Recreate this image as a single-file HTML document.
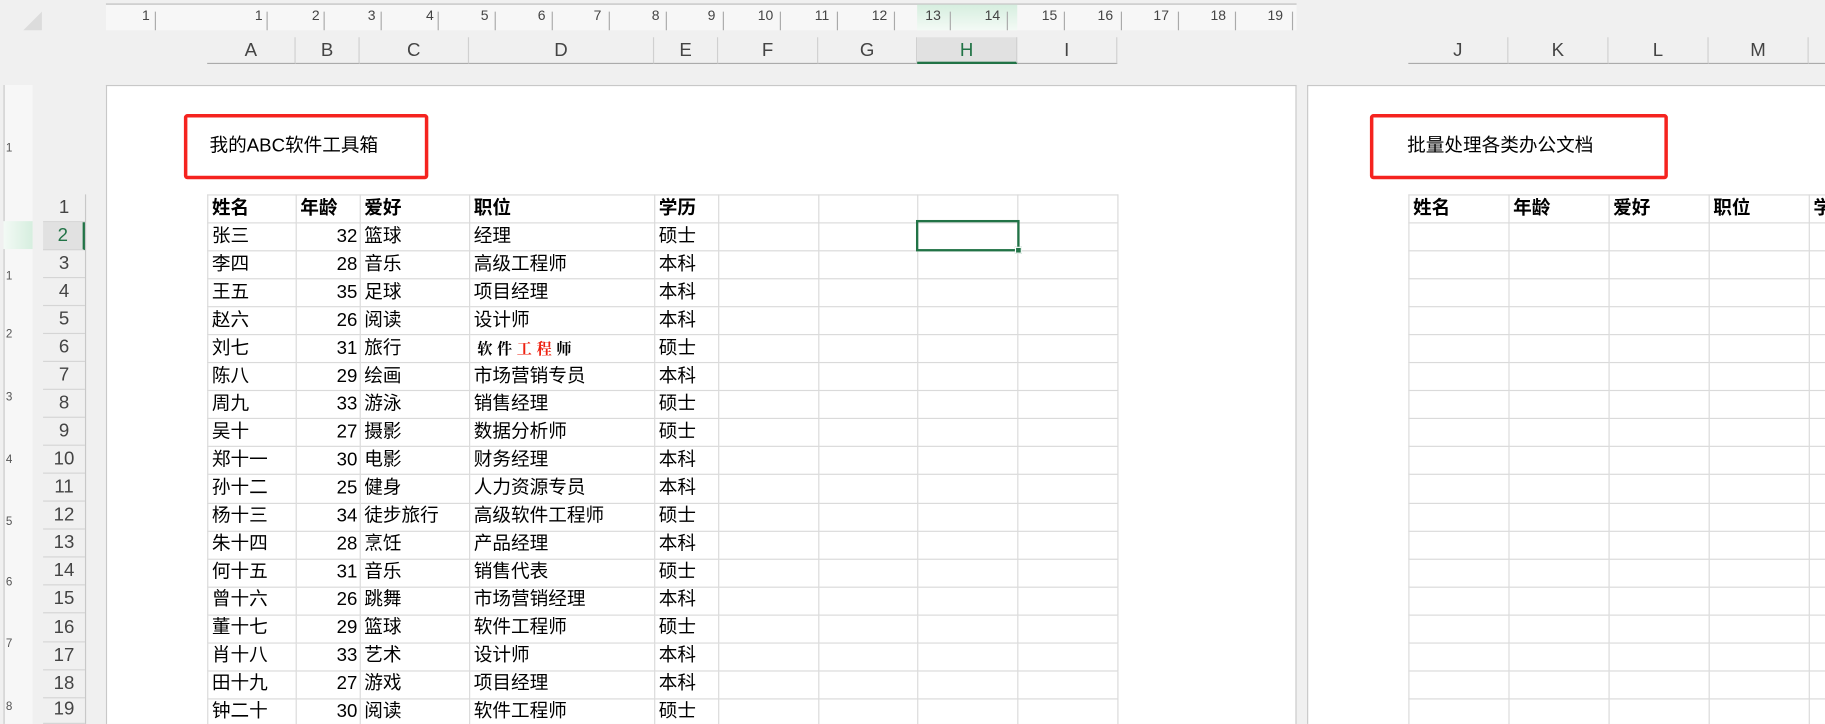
<!DOCTYPE html>
<html style="width:1825px;height:724px;overflow:hidden"><head><meta charset="utf-8"><style>
*{margin:0;padding:0;box-sizing:border-box}
body{width:1825px;height:724px;overflow:hidden;position:relative;background:#f0f0f0;font-family:"Liberation Sans","Noto Sans CJK SC",sans-serif}
#w{position:absolute;left:0;top:0;width:1568px;height:622px;overflow:hidden;transform:scale(1.1639);transform-origin:0 0}
.a{position:absolute}
.rul{top:3px;height:23px;background:#f7f7f7;border-top:1px solid #bdbdbd}
.rn{position:absolute;top:2px;font-size:12px;color:#444}
.tk{position:absolute;top:6px;width:1px;height:16px;background:#aaa}
.ch{position:absolute;top:32px;height:23px;border-bottom:1px solid #ababab;border-right:1px solid #d0d0d0;font-size:16px;color:#444;text-align:center;line-height:24px}
table{position:absolute;border-collapse:collapse;font-size:16px;color:#000;table-layout:fixed}
td{border:1px solid #dadada;height:24.05px;padding:0 3px;white-space:nowrap;overflow:hidden;line-height:22px}
td.n{text-align:right;padding-right:2px}
tr.h td{font-weight:bold}
.rh{position:absolute;left:37px;width:36px;height:24.05px;text-align:center;font-size:16px;color:#444;line-height:24px;border-bottom:1px solid #d5d5d5}
.box{position:absolute;border:3px solid #f5231f;border-radius:3px;background:#fff;font-size:16px;line-height:50px}
</style></head><body><div id="w">
<div class="a" style="left:20px;top:10px;width:0;height:0;border-left:16px solid transparent;border-bottom:16px solid #dcdcdc"></div>
<div class="a rul" style="left:91px;width:1023px"></div>
<div class="a" style="left:788px;top:4px;width:86px;height:22px;background:linear-gradient(#d6eedf,#f3faf5)"></div>
<div class="a" style="left:91px;top:4px;width:1023px;height:22px">
<span class="rn" style="left:31px">1</span><span class="tk" style="left:42px"></span>
<span class="rn" style="left:128px">1</span><span class="tk" style="left:138px"></span>
<span class="rn" style="left:177px">2</span><span class="tk" style="left:187px"></span>
<span class="rn" style="left:225px">3</span><span class="tk" style="left:236px"></span>
<span class="rn" style="left:275px">4</span><span class="tk" style="left:285px"></span>
<span class="rn" style="left:322px">5</span><span class="tk" style="left:334px"></span>
<span class="rn" style="left:371px">6</span><span class="tk" style="left:383px"></span>
<span class="rn" style="left:419px">7</span><span class="tk" style="left:432px"></span>
<span class="rn" style="left:469px">8</span><span class="tk" style="left:481px"></span>
<span class="rn" style="left:517px">9</span><span class="tk" style="left:530px"></span>
<span class="rn" style="left:560px">10</span><span class="tk" style="left:579px"></span>
<span class="rn" style="left:609px">11</span><span class="tk" style="left:628px"></span>
<span class="rn" style="left:658px">12</span><span class="tk" style="left:677px"></span>
<span class="rn" style="left:704px">13</span><span class="tk" style="left:725px"></span>
<span class="rn" style="left:755px">14</span><span class="tk" style="left:774px"></span>
<span class="rn" style="left:804px">15</span><span class="tk" style="left:823px"></span>
<span class="rn" style="left:852px">16</span><span class="tk" style="left:872px"></span>
<span class="rn" style="left:900px">17</span><span class="tk" style="left:921px"></span>
<span class="rn" style="left:949px">18</span><span class="tk" style="left:970px"></span>
<span class="rn" style="left:998px">19</span><span class="tk" style="left:1019px"></span>
</div>
<div class="ch" style="left:178px;width:76px">A</div>
<div class="ch" style="left:254px;width:55px">B</div>
<div class="ch" style="left:309px;width:94px">C</div>
<div class="ch" style="left:403px;width:159px">D</div>
<div class="ch" style="left:562px;width:55px">E</div>
<div class="ch" style="left:617px;width:86px">F</div>
<div class="ch" style="left:703px;width:85px">G</div>
<div class="ch" style="left:788px;width:86px;background:#e1e1e1;border-bottom:2px solid #217346;color:#217346">H</div>
<div class="ch" style="left:874px;width:86px">I</div>
<div class="ch" style="left:1210px;width:86px">J</div>
<div class="ch" style="left:1296px;width:86px">K</div>
<div class="ch" style="left:1382px;width:86px">L</div>
<div class="ch" style="left:1468px;width:86px">M</div>
<div class="ch" style="left:1554px;width:14px;border-right:0"></div>
<div class="a" style="left:3px;top:73px;width:25px;height:549px;background:#f7f7f7;border-left:1px solid #c8c8c8"></div>
<div class="a" style="left:3px;top:190px;width:25px;height:24px;background:linear-gradient(90deg,#f3faf5,#d6eedf)"></div>
<div class="a" style="left:5px;top:122px;font-size:10px;color:#555">1</div>
<div class="a" style="left:5px;top:232px;font-size:10px;color:#555">1</div>
<div class="a" style="left:5px;top:282px;font-size:10px;color:#555">2</div>
<div class="a" style="left:5px;top:336px;font-size:10px;color:#555">3</div>
<div class="a" style="left:5px;top:390px;font-size:10px;color:#555">4</div>
<div class="a" style="left:5px;top:443px;font-size:10px;color:#555">5</div>
<div class="a" style="left:5px;top:495px;font-size:10px;color:#555">6</div>
<div class="a" style="left:5px;top:548px;font-size:10px;color:#555">7</div>
<div class="a" style="left:5px;top:602px;font-size:10px;color:#555">8</div>
<div class="a" style="left:91px;top:73px;width:1023px;height:549px;background:#fff;border:1px solid #c8c8c8;border-bottom:0"></div>
<div class="a" style="left:1123px;top:73px;width:445px;height:549px;background:#fff;border:1px solid #c8c8c8;border-bottom:0;border-right:0"></div>
<div class="box" style="left:158px;top:98px;width:210px;height:56px;padding-left:19px">我的ABC软件工具箱</div>
<div class="box" style="left:1177px;top:98px;width:256px;height:56px;padding-left:29px">批量处理各类办公文档</div>
<div class="a" style="left:0;top:0;width:1568px;height:622px;overflow:hidden">
<table style="left:178px;top:167px;width:782px">
<colgroup><col style="width:76px"><col style="width:55px"><col style="width:94px"><col style="width:159px"><col style="width:55px"><col style="width:86px"><col style="width:85px"><col style="width:86px"><col style="width:86px"></colgroup>
<tr class="h"><td>姓名</td><td>年龄</td><td>爱好</td><td>职位</td><td>学历</td><td></td><td></td><td></td><td></td></tr>
<tr><td>张三</td><td class="n">32</td><td>篮球</td><td>经理</td><td>硕士</td><td></td><td></td><td></td><td></td></tr>
<tr><td>李四</td><td class="n">28</td><td>音乐</td><td>高级工程师</td><td>本科</td><td></td><td></td><td></td><td></td></tr>
<tr><td>王五</td><td class="n">35</td><td>足球</td><td>项目经理</td><td>本科</td><td></td><td></td><td></td><td></td></tr>
<tr><td>赵六</td><td class="n">26</td><td>阅读</td><td>设计师</td><td>本科</td><td></td><td></td><td></td><td></td></tr>
<tr><td>刘七</td><td class="n">31</td><td>旅行</td><td style="font-size:13px;font-family:'Liberation Serif','Noto Serif CJK SC',serif;font-weight:bold;letter-spacing:4px;padding-left:6px">软件<span style="color:#e21">工程</span>师</td><td>硕士</td><td></td><td></td><td></td><td></td></tr>
<tr><td>陈八</td><td class="n">29</td><td>绘画</td><td>市场营销专员</td><td>本科</td><td></td><td></td><td></td><td></td></tr>
<tr><td>周九</td><td class="n">33</td><td>游泳</td><td>销售经理</td><td>硕士</td><td></td><td></td><td></td><td></td></tr>
<tr><td>吴十</td><td class="n">27</td><td>摄影</td><td>数据分析师</td><td>硕士</td><td></td><td></td><td></td><td></td></tr>
<tr><td>郑十一</td><td class="n">30</td><td>电影</td><td>财务经理</td><td>本科</td><td></td><td></td><td></td><td></td></tr>
<tr><td>孙十二</td><td class="n">25</td><td>健身</td><td>人力资源专员</td><td>本科</td><td></td><td></td><td></td><td></td></tr>
<tr><td>杨十三</td><td class="n">34</td><td>徒步旅行</td><td>高级软件工程师</td><td>硕士</td><td></td><td></td><td></td><td></td></tr>
<tr><td>朱十四</td><td class="n">28</td><td>烹饪</td><td>产品经理</td><td>本科</td><td></td><td></td><td></td><td></td></tr>
<tr><td>何十五</td><td class="n">31</td><td>音乐</td><td>销售代表</td><td>硕士</td><td></td><td></td><td></td><td></td></tr>
<tr><td>曾十六</td><td class="n">26</td><td>跳舞</td><td>市场营销经理</td><td>本科</td><td></td><td></td><td></td><td></td></tr>
<tr><td>董十七</td><td class="n">29</td><td>篮球</td><td>软件工程师</td><td>硕士</td><td></td><td></td><td></td><td></td></tr>
<tr><td>肖十八</td><td class="n">33</td><td>艺术</td><td>设计师</td><td>本科</td><td></td><td></td><td></td><td></td></tr>
<tr><td>田十九</td><td class="n">27</td><td>游戏</td><td>项目经理</td><td>本科</td><td></td><td></td><td></td><td></td></tr>
<tr><td>钟二十</td><td class="n">30</td><td>阅读</td><td>软件工程师</td><td>硕士</td><td></td><td></td><td></td><td></td></tr>
</table>
<table style="left:1210px;top:167px;width:430px">
<colgroup><col style="width:86px"><col style="width:86px"><col style="width:86px"><col style="width:86px"><col style="width:86px"></colgroup>
<tr class="h"><td>姓名</td><td>年龄</td><td>爱好</td><td>职位</td><td>学历</td></tr>
<tr><td></td><td></td><td></td><td></td><td></td></tr><tr><td></td><td></td><td></td><td></td><td></td></tr><tr><td></td><td></td><td></td><td></td><td></td></tr><tr><td></td><td></td><td></td><td></td><td></td></tr><tr><td></td><td></td><td></td><td></td><td></td></tr><tr><td></td><td></td><td></td><td></td><td></td></tr><tr><td></td><td></td><td></td><td></td><td></td></tr><tr><td></td><td></td><td></td><td></td><td></td></tr><tr><td></td><td></td><td></td><td></td><td></td></tr><tr><td></td><td></td><td></td><td></td><td></td></tr><tr><td></td><td></td><td></td><td></td><td></td></tr><tr><td></td><td></td><td></td><td></td><td></td></tr><tr><td></td><td></td><td></td><td></td><td></td></tr><tr><td></td><td></td><td></td><td></td><td></td></tr><tr><td></td><td></td><td></td><td></td><td></td></tr><tr><td></td><td></td><td></td><td></td><td></td></tr><tr><td></td><td></td><td></td><td></td><td></td></tr><tr><td></td><td></td><td></td><td></td><td></td></tr>
</table>
<div class="rh" style="top:167px">1</div><div class="rh" style="top:191px;background:#e1e1e1;color:#217346;border-right:2px solid #217346">2</div>
<div class="rh" style="top:215px">3</div><div class="rh" style="top:239px">4</div><div class="rh" style="top:263px">5</div><div class="rh" style="top:287px">6</div><div class="rh" style="top:311px">7</div><div class="rh" style="top:335px">8</div><div class="rh" style="top:359px">9</div><div class="rh" style="top:383px">10</div><div class="rh" style="top:407px">11</div><div class="rh" style="top:431px">12</div><div class="rh" style="top:455px">13</div><div class="rh" style="top:479px">14</div><div class="rh" style="top:503px">15</div><div class="rh" style="top:528px">16</div><div class="rh" style="top:552px">17</div><div class="rh" style="top:576px">18</div><div class="rh" style="top:598px;height:24px">19</div>
<div class="a" style="left:73px;top:167px;width:1px;height:455px;background:#c8c8c8"></div>
</div>
<div class="a" style="left:787px;top:189px;width:89px;height:27px;border:2px solid #217346"></div>
<div class="a" style="left:872px;top:212px;width:6px;height:6px;background:#217346;border:1px solid #fff"></div>
</div></body></html>
